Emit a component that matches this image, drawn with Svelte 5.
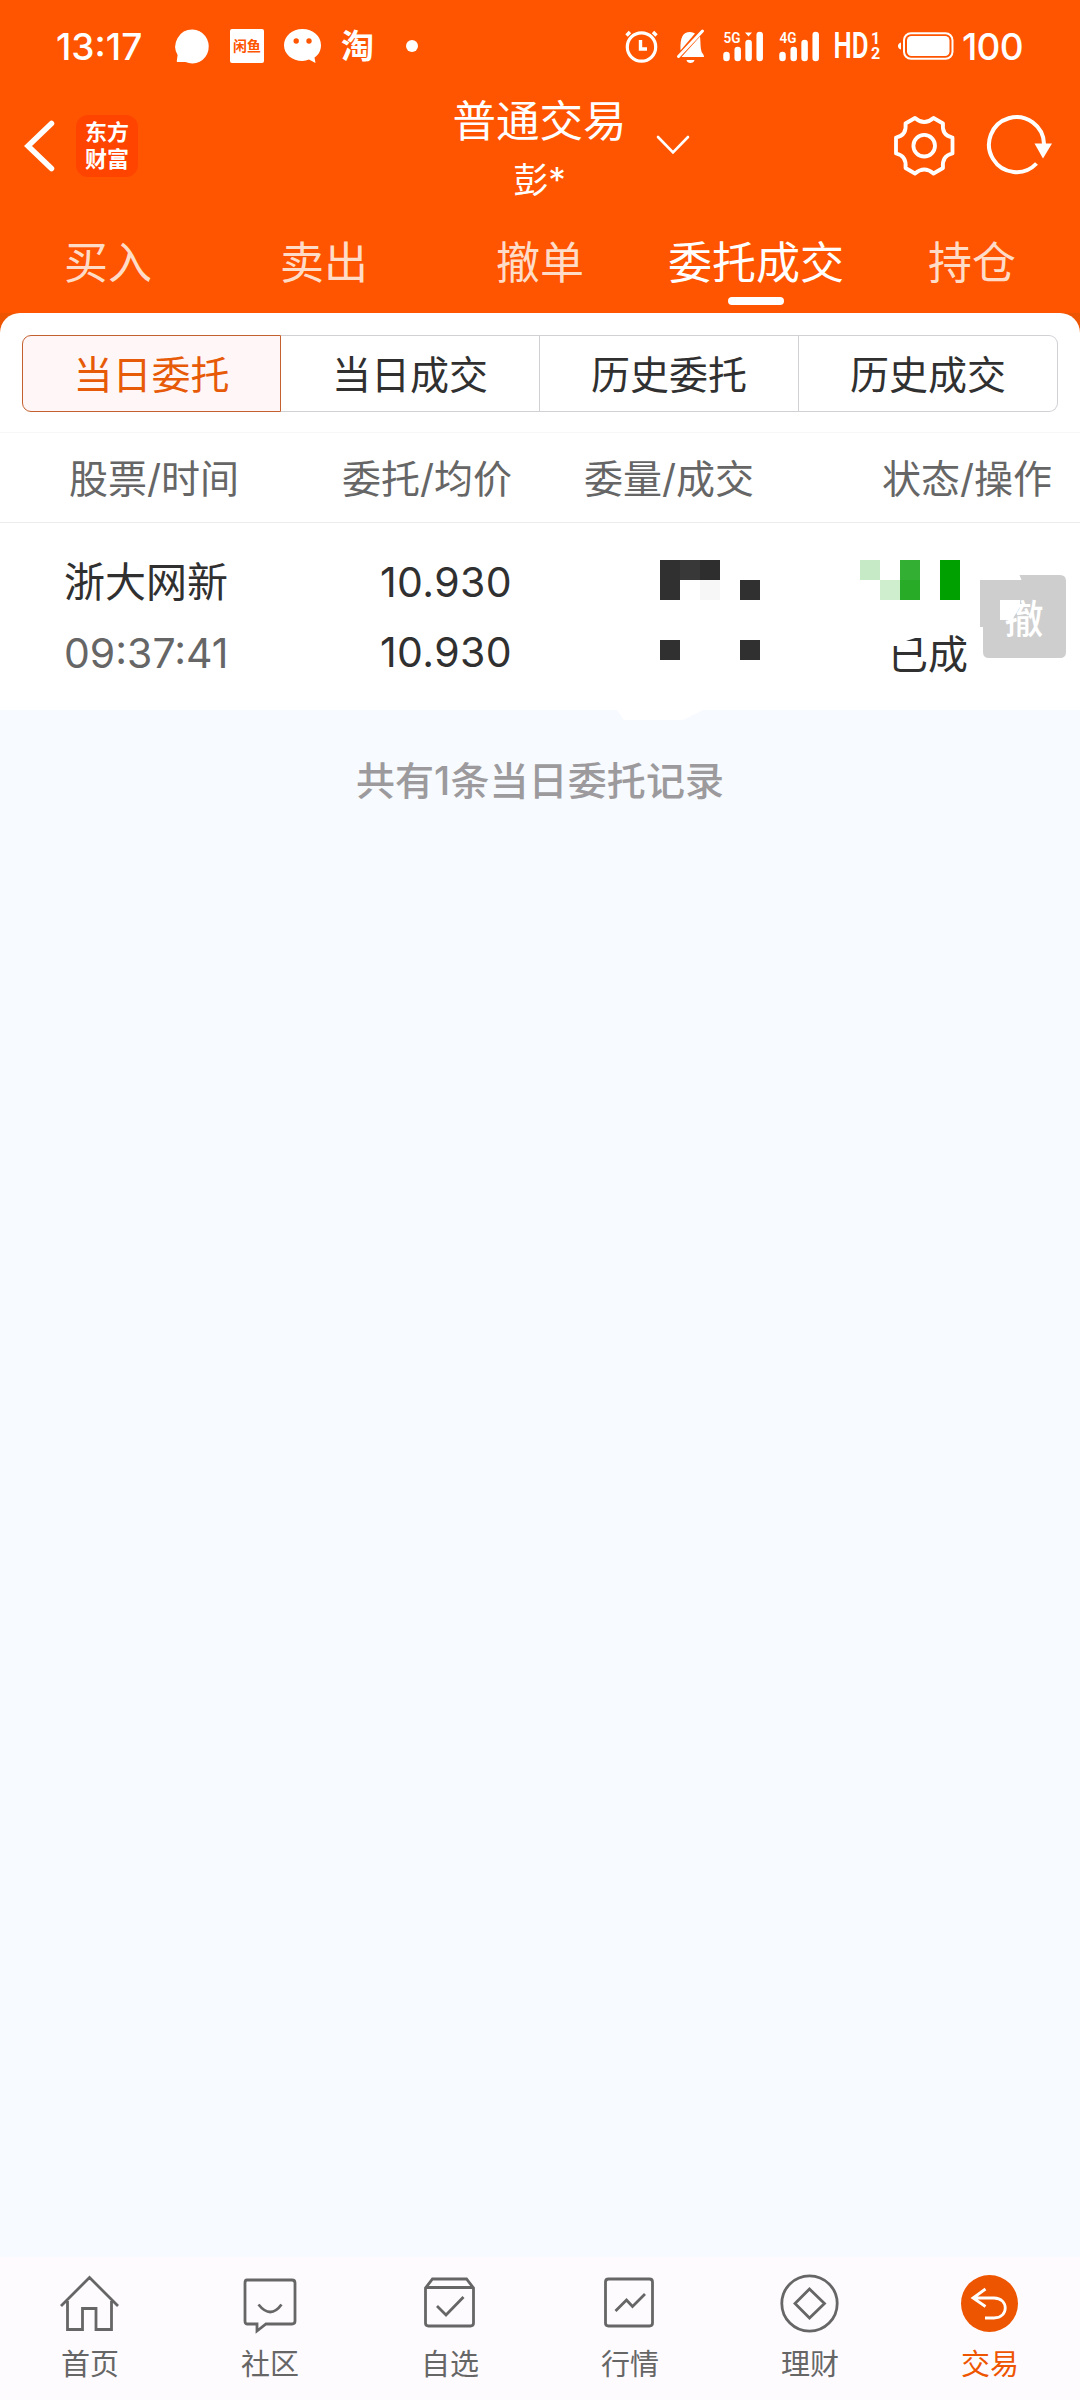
<script lang="ts">
  type Order = {
    name: string;
    time: string;
    price: string;
    average: string;
    status: string;
  };

  const tabs = ['买入', '卖出', '撤单', '委托成交', '持仓'];
  const segments = ['当日委托', '当日成交', '历史委托', '历史成交'];
  const navItems = ['首页', '社区', '自选', '行情', '理财', '交易'];
  const orders: Order[] = [
    { name: '浙大网新', time: '09:37:41', price: '10.930', average: '10.930', status: '已成' }
  ];

  // masked cells: [column, row, colour]
  const volumeMask: [number, number, string][] = [
    [0, 0, '#303030'],
    [1, 0, '#383838'],
    [2, 0, '#2e2e2e'],
    [0, 1, '#303030'],
    [2, 1, '#f7f7f7'],
    [4, 1, '#303030'],
    [0, 4, '#303030'],
    [4, 4, '#303030']
  ];
  const sideMask: [number, number, string][] = [
    [0, 0, '#c6eac6'],
    [1, 1, '#ceeece'],
    [2, 0, '#33b033'],
    [2, 1, '#28ac28'],
    [4, 0, '#00a000'],
    [4, 1, '#00a000']
  ];

  let activeTab = $state(3);
  let activeSegment = $state(0);
  let activeNav = $state(5);
</script>

{#snippet mask(cells: [number, number, string][], rows: number)}
  <svg width="100" height={rows * 20} viewBox={`0 0 5 ${rows}`} shape-rendering="crispEdges">
    {#each cells as [x, y, fill]}
      <rect {x} {y} width="1" height="1" {fill} />
    {/each}
  </svg>
{/snippet}

<div class="page">
  <header>
    <div class="status-bar">
      <span class="clock">13:17</span>
      <svg class="chat" width="34" height="35" viewBox="0 0 34 35">
        <path d="M17.500.5a16.500 17 0 1 1-7 32.500H2.500q-1 0-.7-1l.8-6A17 17 0 0 1 17.500.5z" fill="#fff" />
      </svg>
      <span class="xianyu">闲鱼</span>
      <svg class="wechat" width="38" height="35" viewBox="0 0 38 35">
        <path d="M18.500 0C29 0 37 7 37 16.200c0 5.500-2.500 9.500-6.500 12.400l1 5.400-6.500-3.400c-2 .9-4.200 1.400-6.500 1.400C8 32 0 25 0 16.200S8 0 18.500 0z" fill="#fff" />
        <circle cx="12.200" cy="12" r="2.700" fill="#ff5500" />
        <circle cx="25" cy="12" r="2.700" fill="#ff5500" />
      </svg>
      <span class="taobao">淘</span>
      <i class="dot"></i>

      <div class="system">
        <svg width="33" height="33" viewBox="0 0 33 33" fill="none" stroke="#fff">
          <circle cx="16.500" cy="17" r="14.200" stroke-width="3.200" />
          <path d="M15.500 10v9h6.500" stroke-width="3.400" />
          <path d="M1.500 5.500L5 2M31.500 5.500L28 2" stroke-width="3.400" />
        </svg>
        <svg class="bell" width="28" height="35" viewBox="0 0 28 35">
          <path d="M3.500 21.500C3 8 6 3 13 3q3 0 5 1.500zM23 7.500c.7 5 .2 11 1.500 15 .5 2 2.500 2.500 2.500 5.500H4.500zM9.500 31h8c-.5 4-7.500 4-8 0z" fill="#fff" />
          <path d="M1.500 27.500L25.500 2" stroke="#fff" stroke-width="3" stroke-linecap="round" />
        </svg>
        <svg class="signal" width="41" height="31" viewBox="0 0 41 31">
          <text x="0.500" y="12" textLength="17" lengthAdjust="spacingAndGlyphs">5G</text>
          <path d="M3.500 24v3M14.700 19v8M25.600 12v15M36.700 4v23" />
          <path class="caret" d="M22 1.500h7l-3.500 4z" />
        </svg>
        <svg class="signal" width="41" height="31" viewBox="0 0 41 31">
          <text x="0.500" y="12" textLength="17" lengthAdjust="spacingAndGlyphs">4G</text>
          <path d="M3.500 24v3M14.700 19v8M25.600 12v15M36.700 4v23" />
        </svg>
        <div class="hd">
          <svg width="34" height="28" viewBox="0 0 34 28">
            <text x="-1.500" y="27" textLength="35" lengthAdjust="spacingAndGlyphs">HD</text>
          </svg>
          <div class="sims"><span>1</span><span>2</span></div>
        </div>
        <svg class="battery" width="56" height="28" viewBox="0 0 56 28">
          <path d="M3 10.500v7q-3-1-3-3.500t3-3.500z" fill="#fff" />
          <rect x="6" y="1.200" width="48.500" height="25.600" rx="7" fill="none" stroke="#fff" stroke-width="2" />
          <rect x="9" y="4" width="42.500" height="20" rx="4.500" fill="#fff" />
        </svg>
        <span class="level">100</span>
      </div>
    </div>

    <div class="title-bar">
      <div class="left">
        <svg width="32" height="52" viewBox="0 0 32 52" fill="none" stroke="#fff" stroke-width="5.500" stroke-linecap="round">
          <path d="M27.500 3.500L4 26l23.500 22.500" />
        </svg>
        <div class="logo"><span>东方</span><span>财富</span></div>
      </div>
      <div class="account">
        <div class="names">
          <span class="title">普通交易</span>
          <span class="user">彭*</span>
        </div>
        <svg width="35" height="20" viewBox="0 0 35 20" fill="none" stroke="#fff" stroke-width="2.600" stroke-linecap="round">
          <path d="M2 2l15 15.500L32 2" />
        </svg>
      </div>
      <div class="right">
        <svg width="61" height="60" viewBox="0 0 61 60" fill="none" stroke="#fff" stroke-width="3.800" stroke-linejoin="round">
          <path d="M21 2Q30.300 10 39.500 2L49 7.500C48 15 51 20 58.500 21.500V37.500C51 39 48 44 49 52L39.500 57.500Q30.300 49.500 21 57.500L11.500 52C12.500 44 9.500 39 2 37.500V21.500C9.500 20 12.500 15 11.500 7.500z" />
          <circle cx="30.200" cy="29.700" r="10.800" />
        </svg>
        <svg width="66" height="60" viewBox="0 0 66 60">
          <path d="M49.500 47.500A27.500 27.500 0 1 1 57 28" fill="none" stroke="#fff" stroke-width="4" />
          <path d="M47.500 27.500h17.500l-9 15z" fill="#fff" />
        </svg>
      </div>
    </div>

    <nav class="tabs">
      {#each tabs as tab, index}
        <button class:active={index === activeTab} onclick={() => (activeTab = index)}>{tab}</button>
      {/each}
    </nav>
  </header>

  <main>
    <div class="sheet">
      <div class="segments">
        {#each segments as segment, index}
          <button class:active={index === activeSegment} onclick={() => (activeSegment = index)}>
            {segment}
          </button>
        {/each}
      </div>
    </div>

    <div class="columns">
      <span>股票/时间</span>
      <span>委托/均价</span>
      <span>委量/成交</span>
      <span>状态/操作</span>
    </div>

    {#each orders as order}
      <div class="order">
        <div class="stock">
          <span>{order.name}</span>
          <span class="time">{order.time}</span>
        </div>
        <div class="price">
          <span>{order.price}</span>
          <span>{order.average}</span>
        </div>
        <div class="volume">{@render mask(volumeMask, 5)}</div>
        <div class="state">
          {@render mask(sideMask, 2)}
          <span>{order.status}</span>
          <svg class="patch" width="30" height="13" viewBox="0 0 30 13">
            <path d="M0 0h30v3.500L16 8v5H0z" fill="#fff" />
          </svg>
        </div>
        <svg class="cancel" width="86" height="84" viewBox="0 0 86 84">
          <path d="M39.500 0H80q6 0 6 6v71q0 6-6 6H9q-6 0-6-6V52H0V5h41.500z" fill="#cecece" />
          <text x="24.500" y="58">撤</text>
          <path d="M20 25h20v7l-8 13H20z" fill="#fff" />
        </svg>
        <svg class="bulge" width="86" height="10" viewBox="0 0 86 10">
          <path d="M0 0h86L66 10H7z" fill="#fff" />
        </svg>
      </div>
    {/each}

    <p class="summary">共有{orders.length}条当日委托记录</p>
  </main>

  <nav class="bottom">
    {#each navItems as item, index}
      <button class:active={index === activeNav} onclick={() => (activeNav = index)}>
        <svg width="60" height="60" viewBox="0 0 60 60">
          {#if index === 0}
            <path d="M1 31L29.500 2.500 58 31M7.500 26v28.500h15V33.500H36v21h15.500V26" />
          {:else if index === 1}
            <path d="M7 5h45q3 0 3 3v38q0 3-3 3H26l-9 7v-7H7q-2 0-2-3V8q0-3 2-3zM18.500 29.500q12 15 23 0" />
          {:else if index === 2}
            <path d="M12.500 4h34l7 9v35q0 3-3 3H8.500q-3 0-3-3V13zM5.500 12.500h48M17 31l9 9 17.500-18" />
          {:else if index === 3}
            <path d="M8.500 4h41q3 0 3 3v41q0 3-3 3h-41q-3 0-3-3V7q0-3 3-3zM15.500 36l11-11 6 6.500L45 19" />
          {:else if index === 4}
            <circle cx="29.500" cy="28.500" r="27.700" />
            <path d="M29.500 14l15 14.500L29.500 43 15 28.500z" />
          {:else}
            <circle class="disc" cx="29.500" cy="28.500" r="28.500" />
            <path class="arrow" d="M25.500 14L13 23l12.500 8.500M13 23h21c15 0 15 20 0 20h-9" />
          {/if}
        </svg>
        <span>{item}</span>
      </button>
    {/each}
  </nav>
</div>

<style>
  :global(body) {
    margin: 0;
  }

  .page {
    display: flex;
    flex-direction: column;
    width: 1080px;
    height: 2400px;
    overflow: hidden;
    background: #f7faff;
    color: #303030;
    font-family: Inter, 'Noto Sans CJK SC', sans-serif;
  }

  svg {
    display: block;
    flex: none;
    overflow: visible;
  }

  button {
    padding: 0;
    border: 0;
    background: none;
    color: inherit;
    font: inherit;
  }

  header {
    height: 313px;
    background: #ff5500;
    color: #fff;
  }

  .status-bar {
    display: flex;
    align-items: center;
    height: 92px;
    padding: 0 56px 0 56px;
    box-sizing: border-box;
  }

  .clock {
    width: 119px;
    font-size: 37px;
    font-weight: 500;
  }

  .xianyu {
    width: 34px;
    height: 34px;
    margin-left: 21px;
    border-radius: 2px;
    background: #fff;
    color: #ff5500;
    font-size: 14px;
    font-weight: 700;
    line-height: 34px;
    text-align: center;
  }

  .wechat {
    margin-left: 20px;
  }

  .taobao {
    width: 34px;
    margin-left: 19px;
    font-size: 33px;
    font-weight: 700;
    line-height: 40px;
  }

  .dot {
    width: 12px;
    height: 12px;
    margin-left: 31px;
    border-radius: 50%;
    background: #fff;
  }

  .system {
    display: flex;
    align-items: center;
    margin-left: auto;
  }

  .bell {
    margin: 0 18px 0 19px;
  }

  .signal {
    margin-right: 15px;
    fill: none;
    stroke: #fff;
    stroke-width: 6.5;
    stroke-linecap: round;
  }

  .signal text {
    fill: #fff;
    stroke: none;
    font-family: Roboto, sans-serif;
    font-size: 15px;
    font-weight: 600;
  }

  .signal .caret {
    fill: #fff;
    stroke: none;
  }

  .hd {
    display: flex;
    gap: 2px;
    width: 45px;
    margin-right: 18px;
    fill: #fff;
    font-family: Roboto, sans-serif;
    font-size: 37px;
    font-weight: 600;
  }

  .sims {
    display: flex;
    flex-direction: column;
    font-size: 16px;
    font-weight: 700;
    line-height: 15px;
  }

  .battery {
    margin-right: 8px;
  }

  .level {
    width: 62px;
    font-size: 37px;
    font-weight: 500;
    letter-spacing: -0.8px;
  }

  .title-bar {
    display: grid;
    grid-template-columns: 453px 1fr auto;
    height: 120px;
  }

  .left {
    display: flex;
    align-items: center;
    gap: 20px;
    height: 108px;
    padding-left: 24px;
  }

  .logo {
    display: flex;
    flex-direction: column;
    justify-content: center;
    width: 62px;
    height: 62px;
    border-radius: 12px;
    background: #ff4400;
    font-size: 22px;
    font-weight: 700;
    line-height: 27px;
    text-align: center;
  }

  .account {
    display: flex;
    align-items: flex-start;
    gap: 30px;
  }

  .account svg {
    margin-top: 43px;
  }

  .names {
    display: flex;
    flex-direction: column;
    align-items: center;
    width: 173px;
    white-space: nowrap;
  }

  .title {
    font-size: 43.5px;
    line-height: 58px;
  }

  .user {
    font-size: 35px;
    line-height: 60px;
  }

  .right {
    display: flex;
    align-items: center;
    gap: 32px;
    height: 108px;
    padding-right: 27px;
  }

  .tabs {
    display: grid;
    grid-template-columns: repeat(5, 1fr);
    height: 101px;
  }

  .tabs button {
    position: relative;
    color: #ffdcc8;
    font-size: 44px;
    line-height: 100px;
  }

  .tabs .active {
    color: #fff;
  }

  .tabs .active::after {
    position: absolute;
    bottom: 8px;
    left: 80px;
    width: 56px;
    height: 8px;
    border-radius: 4px;
    background: #fff;
    content: '';
  }

  main {
    flex: 1;
    background: linear-gradient(#ee5500 20px, transparent 20px);
  }

  .sheet {
    height: 120px;
    padding: 22px 22px 0;
    border-bottom: 1px solid #f7f7f7;
    border-radius: 20px 20px 0 0;
    box-sizing: border-box;
    background: #fff;
  }

  .segments {
    display: grid;
    grid-template-columns: repeat(4, 1fr);
    height: 77px;
  }

  .segments button {
    padding-top: 3px;
    border: 1px solid #d0d0d5;
    border-left-width: 0;
    font-size: 39px;
    line-height: 72px;
  }

  .segments button:first-child {
    border-left-width: 1px;
    border-radius: 9px 0 0 9px;
  }

  .segments button:last-child {
    border-radius: 0 9px 9px 0;
  }

  .segments .active {
    border-color: #c4602f;
    background: #fff6f7;
    color: #e65a08;
  }

  .columns {
    display: grid;
    grid-template-columns: 273px 242px 298px auto;
    height: 90px;
    padding-left: 69px;
    border-bottom: 1px solid #ececec;
    box-sizing: border-box;
    background: #fff;
    color: #666;
    font-size: 39px;
    line-height: 92px;
  }

  .order {
    position: relative;
    display: grid;
    grid-template-columns: 231px 217px 348px 120px 86px;
    height: 187px;
    padding-left: 64px;
    background: #fff;
  }

  .stock,
  .price {
    display: flex;
    flex-direction: column;
    padding-top: 24px;
    font-size: 41px;
    line-height: 70px;
  }

  .time {
    color: #666;
    line-height: 72px;
  }

  .price {
    align-items: flex-end;
    letter-spacing: 0.4px;
  }

  .volume {
    padding: 37px 0 0 148px;
  }

  .state {
    position: relative;
    padding-top: 37px;
  }

  .state span {
    display: block;
    padding-left: 28px;
    font-size: 40px;
    line-height: 110px;
  }

  .patch {
    position: absolute;
    top: 110px;
    left: 30px;
  }

  .cancel {
    margin-top: 52px;
  }

  .cancel text {
    fill: #fff;
    font-size: 39px;
    font-weight: 500;
  }

  .bulge {
    position: absolute;
    top: 187px;
    left: 617px;
  }

  .summary {
    margin: 0;
    color: #9c9a9c;
    font-size: 39px;
    font-weight: 500;
    letter-spacing: 0.1px;
    line-height: 142px;
    text-align: center;
  }

  .bottom {
    display: grid;
    grid-template-columns: repeat(6, 1fr);
    height: 143px;
    background: #fefbff;
  }

  .bottom button {
    display: flex;
    flex-direction: column;
    align-items: center;
    padding-top: 18px;
    color: #666;
    font-size: 29px;
    line-height: 60px;
  }

  .bottom svg {
    fill: none;
    stroke: #666;
    stroke-width: 2.8;
  }

  .bottom .active {
    color: #ee5500;
  }

  .bottom .disc {
    fill: #ee5500;
    stroke: none;
  }

  .bottom .arrow {
    stroke: #fff;
  }
</style>
